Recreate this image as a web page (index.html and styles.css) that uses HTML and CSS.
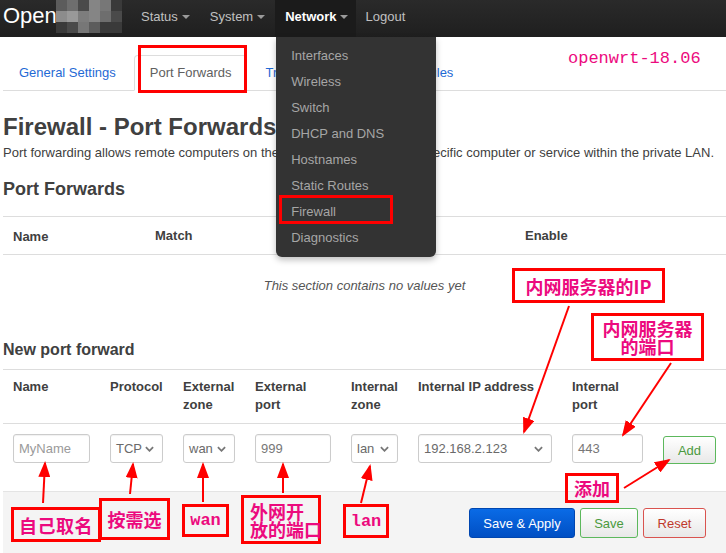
FILE: index.html
```html
<!DOCTYPE html>
<html>
<head>
<meta charset="utf-8">
<title>Firewall - Port Forwards</title>
<link rel="stylesheet" href="styles.css">
</head>
<body>
<header class="navbar">
  <div class="brand">OpenWrt
    <div class="mosaic">
      <i class="t1"></i><i class="t2"></i><i class="t3"></i><i class="t4"></i><i class="t5"></i><i class="t6"></i>
      <i class="t7"></i><i class="t8"></i><i class="t9"></i><i class="t4"></i><i class="t2"></i><i class="t3"></i>
      <i class="t6"></i><i class="t3"></i><i class="t5"></i><i class="t1"></i><i class="t6"></i><i class="t6"></i>
    </div>
  </div>
  <nav class="menu">
    <div class="menu-item">Status<span class="caret"></span></div>
    <div class="menu-item">System<span class="caret"></span></div>
    <div class="menu-item active">Network<span class="caret"></span>
      <ul class="dropdown">
        <li>Interfaces</li>
        <li>Wireless</li>
        <li>Switch</li>
        <li>DHCP and DNS</li>
        <li>Hostnames</li>
        <li>Static Routes</li>
        <li>Firewall</li>
        <li>Diagnostics</li>
      </ul>
    </div>
    <div class="menu-item">Logout</div>
  </nav>
</header>

<main class="main">
  <ul class="tabs">
    <li class="tab">General Settings</li>
    <li class="tab active">Port Forwards</li>
    <li class="tab">Traffic Rules</li>
    <li class="tab">Custom Rules</li>
  </ul>

  <h2 class="title">Firewall - Port Forwards</h2>
  <p class="desc">Port forwarding allows remote computers on the Internet to connect to a specific computer or service within the private LAN.</p>

  <h3 class="subtitle">Port Forwards</h3>
  <div class="table">
    <div class="thead">
      <div class="th">Name</div>
      <div class="th">Match</div>
      <div class="th">Enable</div>
    </div>
    <div class="empty">This section contains no values yet</div>
  </div>

  <h4 class="subtitle2">New port forward</h4>
  <div class="form">
    <div class="fh">Name</div>
    <div class="fh">Protocol</div>
    <div class="fh">External<br>zone</div>
    <div class="fh">External<br>port</div>
    <div class="fh">Internal<br>zone</div>
    <div class="fh">Internal IP address</div>
    <div class="fh">Internal<br>port</div>
    <div class="fh"></div>

    <div class="fc"><span class="input w-name placeholder">MyName</span></div>
    <div class="fc"><span class="select w-proto">TCP<svg class="chev" viewBox="0 0 10 6"><path d="M1 1l4 4 4-4"/></svg></span></div>
    <div class="fc"><span class="select w-ezone">wan<svg class="chev" viewBox="0 0 10 6"><path d="M1 1l4 4 4-4"/></svg></span></div>
    <div class="fc"><span class="input w-eport">999</span></div>
    <div class="fc"><span class="select w-izone">lan<svg class="chev" viewBox="0 0 10 6"><path d="M1 1l4 4 4-4"/></svg></span></div>
    <div class="fc"><span class="select w-ip">192.168.2.123<svg class="chev" viewBox="0 0 10 6"><path d="M1 1l4 4 4-4"/></svg></span></div>
    <div class="fc"><span class="input w-iport">443</span></div>
    <div class="fc"><span class="btn btn-add">Add</span></div>
  </div>
</main>

<footer class="actions">
  <span class="btn btn-apply">Save &amp; Apply</span>
  <span class="btn btn-save">Save</span>
  <span class="btn btn-reset">Reset</span>
</footer>

<div class="notes">
  <svg class="arrows" width="726" height="553" viewBox="0 0 726 553">
    <defs>
      <marker id="ah" markerUnits="userSpaceOnUse" markerWidth="16" markerHeight="12" refX="14" refY="6" orient="auto">
        <path d="M0 0L16 6L0 12z" fill="#ff0000"/>
      </marker>
    </defs>
    <g stroke="#ff0000" stroke-width="2" marker-end="url(#ah)">
      <line x1="569" y1="306" x2="524" y2="432"/>
      <line x1="671" y1="363" x2="623" y2="435"/>
      <line x1="43" y1="503" x2="45" y2="463"/>
      <line x1="130" y1="494" x2="133" y2="464"/>
      <line x1="203" y1="502" x2="203" y2="464"/>
      <line x1="283" y1="493" x2="283" y2="464"/>
      <line x1="361" y1="503" x2="370" y2="466"/>
      <line x1="624" y1="488" x2="669" y2="460"/>
    </g>
  </svg>
  <div class="version">openwrt-18.06</div>
  <div class="box b-tab"></div>
  <div class="box b-fw"></div>
  <div class="box b-ip cjk">内网服务器的IP</div>
  <div class="box b-port cjk">内网服务器<br>的端口</div>
  <div class="box b-name cjk">自己取名</div>
  <div class="box b-proto cjk">按需选</div>
  <div class="box b-wan mono">wan</div>
  <div class="box b-ext cjk">外网开<br>放的端口</div>
  <div class="box b-lan mono">lan</div>
  <div class="box b-add cjk">添加</div>
</div>
</body>
</html>
```

FILE: styles.css
```css
* { box-sizing: border-box; }
html, body { margin: 0; padding: 0; background: #fff; }
body {
  font-family: "Liberation Sans", Arial, sans-serif;
  font-size: 13px;
  color: #404040;
  width: 726px;
  height: 553px;
  overflow: hidden;
  position: relative;
}

/* navbar */
.navbar {
  height: 37px;
  background: linear-gradient(#2a2a2a, #1f1f1f);
  display: flex;
}
.brand {
  position: relative;
  width: 131px;
  padding-left: 3px;
  color: #fff;
  font-size: 22px;
  line-height: 31px;
  overflow: hidden;
  white-space: nowrap;
}
.mosaic {
  position: absolute;
  left: 56px;
  top: 0;
  display: grid;
  grid-template-columns: repeat(6, 11px);
  grid-auto-rows: 11px;
}
.mosaic i { display: block; }
.t1 { background: #5c5c5c; }
.t2 { background: #6e6e6e; }
.t3 { background: #4a4a4a; }
.t4 { background: #858585; }
.t5 { background: #777; }
.t6 { background: #3a3a3a; }
.t7 { background: #8c8c8c; }
.t8 { background: #999; }
.t9 { background: #7d7d7d; }

.menu { display: flex; }
.menu-item {
  position: relative;
  display: flex;
  align-items: center;
  padding: 0 10px 4px;
  color: #c0c0c0;
  font-size: 13px;
}
.menu-item.active {
  background: #1b1b1b;
  color: #fff;
  font-weight: bold;
  padding-right: 8px;
}
.caret {
  margin-left: 4px;
  margin-top: 1px;
  border-left: 4px solid transparent;
  border-right: 4px solid transparent;
  border-top: 4px solid #9a9a9a;
}
.active .caret { margin-left: 3px; }
.dropdown {
  position: absolute;
  left: 1px;
  top: 37px;
  width: 160px;
  margin: 0;
  padding: 6px 0 6px;
  list-style: none;
  background: #333;
  border-radius: 0 0 6px 6px;
  box-shadow: 0 3px 6px rgba(0, 0, 0, 0.25);
  font-weight: normal;
  z-index: 5;
}
.dropdown li {
  height: 26px;
  line-height: 26px;
  padding-left: 15px;
  color: #a6a6a6;
  font-size: 13px;
}

/* main */
.main { padding-left: 3px; }
.tabs {
  display: flex;
  list-style: none;
  margin: 18px 0 0;
  padding: 0;
  height: 36px;
  border-bottom: 1px solid #ddd;
}
.tab {
  height: 36px;
  line-height: 34px;
  padding: 0 15px;
  margin-right: 2px;
  border: 1px solid transparent;
  border-radius: 4px 4px 0 0;
  color: #1f6ad5;
}
.tab.active {
  border-color: #ddd #ddd #fff;
  color: #606060;
  background: #fff;
}

.title {
  margin: 22px 0 0;
  font-size: 24px;
  line-height: 28px;
  font-weight: bold;
}
.desc {
  margin: 4px 0 0;
  line-height: 16px;
}
.subtitle {
  margin: 17px 0 0;
  font-size: 18px;
  line-height: 22px;
  font-weight: bold;
}
.table { margin-top: 16px; }
.thead {
  display: grid;
  grid-template-columns: 142px 370px 1fr;
  height: 39px;
  border-top: 1px solid #ddd;
  border-bottom: 1px solid #ddd;
  align-items: center;
}
.th { padding-left: 10px; font-weight: bold; }
.th:first-child { padding-top: 1px; }
.empty {
  height: 60px;
  display: flex;
  align-items: center;
  justify-content: center;
  font-style: italic;
  color: #555;
}
.subtitle2 {
  margin: 25px 0 0;
  font-size: 16px;
  line-height: 20px;
  font-weight: bold;
}
.form {
  margin-top: 9px;
  display: grid;
  grid-template-columns: 97px 73px 72px 96px 67px 154px 91px 1fr;
  border-top: 1px solid #ddd;
}
.fh {
  padding: 8px 0 9px 10px;
  line-height: 18px;
  font-weight: bold;
  white-space: nowrap;
  border-bottom: 1px solid #ddd;
}
.fc {
  height: 67px;
  padding: 10px 0 0 10px;
}
.input, .select {
  display: flex;
  align-items: center;
  height: 29px;
  padding-left: 5px;
  border: 1px solid #ccc;
  border-radius: 3px;
  box-shadow: inset 0 1px 1px rgba(0, 0, 0, 0.06);
  color: #777;
  background: #fff;
}
.placeholder { color: #9a9a9a; }
.select {
  justify-content: space-between;
  padding-right: 8px;
  color: #6a6a6a;
}
.chev { width: 9px; height: 6px; fill: none; stroke: #777; stroke-width: 2; }
.w-name { width: 77px; }
.w-proto { width: 53px; }
.w-ezone { width: 52px; }
.w-eport { width: 76px; }
.w-izone { width: 47px; }
.w-ip { width: 134px; }
.w-iport { width: 71px; }

.btn {
  display: inline-flex;
  align-items: center;
  justify-content: center;
  height: 30px;
  border-radius: 3px;
  border: 1px solid #ccc;
  background: linear-gradient(#fff, #e8e8e8);
}
.btn-add {
  width: 53px;
  height: 28px;
  margin-top: 2px;
  border-color: #5cb85c;
  color: #4a9a3e;
}
.actions {
  margin-left: 3px;
  height: 62px;
  border-top: 1px solid #e4e4e4;
  background: #f4f4f4;
  display: flex;
  justify-content: flex-end;
  gap: 5px;
  padding: 16px 20px 0 0;
}
.btn-apply {
  width: 106px;
  background: linear-gradient(#0a6be6, #004fc4);
  border-color: #0046b0;
  color: #fff;
}
.btn-save {
  width: 58px;
  border-color: #5cb85c;
  color: #4a9a3e;
}
.btn-reset {
  width: 63px;
  border-color: #d9534f;
  color: #c0392b;
}

/* annotation overlay */
.notes {
  position: absolute;
  left: 0;
  top: 0;
  width: 726px;
  height: 553px;
  pointer-events: none;
  z-index: 10;
}
.arrows { position: absolute; left: 0; top: 0; }
.version {
  position: absolute;
  left: 568px;
  top: 49px;
  font-family: "Liberation Mono", monospace;
  font-size: 17px;
  line-height: 20px;
  color: #ec0a7e;
}
.box {
  position: absolute;
  border: 3px solid #ff0000;
  color: #ec0a7e;
  display: flex;
  align-items: center;
  justify-content: center;
  text-align: center;
  white-space: nowrap;
}
.cjk {
  font-family: "Noto Sans CJK SC", "Noto Sans", sans-serif;
  font-weight: bold;
  font-size: 18px;
  line-height: 18px;
}
.mono {
  font-family: "Liberation Mono", monospace;
  font-weight: bold;
  font-size: 17px;
}
.b-tab { left: 138px; top: 45px; width: 109px; height: 48px; }
.b-fw { left: 279px; top: 195px; width: 114px; height: 29px; }
.b-ip { left: 512px; top: 268px; width: 153px; height: 35px; }
.b-port { left: 591px; top: 313px; width: 113px; height: 48px; }
.b-name { left: 11px; top: 507px; width: 90px; height: 35px; letter-spacing: 0.5px; }
.b-proto { left: 99px; top: 498px; width: 71px; height: 42px; }
.b-wan { left: 182px; top: 504px; width: 47px; height: 33px; }
.b-ext { left: 241px; top: 495px; width: 80px; height: 49px; justify-content: flex-start; text-align: left; padding-left: 6px; }
.b-lan { left: 343px; top: 504px; width: 46px; height: 34px; }
.b-add { left: 565px; top: 473px; width: 54px; height: 30px; }
```
